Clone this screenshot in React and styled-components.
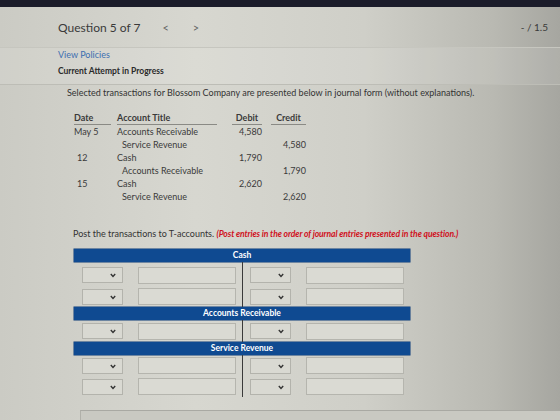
import React from 'react';
import styled, { createGlobalStyle } from 'styled-components';

const GlobalStyle = createGlobalStyle`
  html, body { margin: 0; padding: 0; }
  body {
    width: 560px; height: 420px; overflow: hidden;
    font-family: Lato, "Open Sans", sans-serif;
    color: #2f2f2f;
    background: linear-gradient(90deg, #cbcbc4 0%, #d7d7d0 35%, #cfcfc8 65%, #b9b9b2 88%, #a6a6a0 100%);
  }
`;

const TopBar = styled.div`height: 7px; background: #1b1c2a;`;

const Header = styled.div`
  display: flex; align-items: center; justify-content: space-between;
  height: 40px; padding: 0 12px 0 58px;
`;

const Title = styled.div`display: flex; align-items: center; font-size: 12px; color: #3a3a3a;`;
const Nav = styled.span`
  margin-left: ${({ $gap }) => $gap}px;
  font-size: 11px; color: #666;
`;
const Score = styled.span`font-size: 10px; color: #3a3a3a;`;

const Policies = styled.div`
  border-top: 1px solid #c6c6bf;
  border-bottom: 1px solid #bdbdb6;
  background: rgba(255, 255, 255, 0.1);
  padding: 0 0 4px 58px;
`;
const Link = styled.div`font-size: 9px; color: #3d6fb0; line-height: 14px;`;
const Status = styled.div`font-size: 8.5px; font-weight: 700; color: #2a2a2a; line-height: 18px;`;

const Body = styled.div`padding: 2px 0 0 67px;`;
const Intro = styled.p`margin: 0; font-size: 9px; color: #333; line-height: 12px;`;

const Journal = styled.table`
  margin: 12px 0 0 7px;
  width: 232px;
  border-collapse: collapse;
  table-layout: fixed;
  font-size: 9px; color: #3a3a3a;
  td, th { padding: 0; height: 13px; line-height: 13px; white-space: nowrap; }
  th { font-weight: 700; text-align: left; }
`;
const Col = styled.col`width: ${({ $w }) => $w}px;`;
const HeadLabel = styled.span`
  display: inline-block; box-sizing: border-box;
  width: ${({ $w }) => $w}px;
  text-align: ${({ $align }) => $align || 'left'};
  border-bottom: 1.5px solid #8a8a85; line-height: 12px;
`;
const DateCell = styled.td`padding-left: ${({ $pad }) => $pad || 0}px !important;`;
const AcctCell = styled.td`padding-left: ${({ $indent }) => ($indent ? 5 : 0)}px !important;`;
const NumCell = styled.td`text-align: right;`;
const HeadNum = styled.th`text-align: right !important;`;

const Instruction = styled.p`
  margin: 25px 0 0 6px; font-size: 9px; line-height: 12px; color: #333;
  em { color: #d0101c; font-weight: 700; font-size: 8.6px; letter-spacing: -0.1px; }
`;

const TAccounts = styled.div`margin: 9px 0 0 7px; width: 336px;`;

const Bar = styled.div`
  height: 13px; line-height: 13px;
  background: #0f4a91;
  color: #fff; font-size: 8.5px; font-weight: 700; text-align: center;
  box-shadow: 0 0 0 0.5px #0a3a78;
`;

const Row = styled.div`
  display: grid; grid-template-columns: 169px 1fr;
  height: ${({ $h }) => $h}px;
`;
const Side = styled.div`
  display: flex; align-items: center;
  padding-left: ${({ $pad }) => $pad}px;
  border-right: ${({ $split }) => ($split ? '1px solid #3a3a3a' : 'none')};
`;
const Select = styled.div`
  position: relative;
  width: 41px; height: 16px; box-sizing: border-box;
  border: 1px solid #b3b3ac; background: #d9d9d2;
  margin-right: 15px;
  svg { position: absolute; right: 6px; top: 5px; }
`;
const Field = styled.div`
  width: 98px; height: 17px; box-sizing: border-box;
  border: 1px solid #b5b5ae; background: #dadad3;
`;

const Next = styled.div`
  margin: 13px 0 0 13px; height: 20px;
  border-top: 1px solid #a9a9a3; border-left: 1px solid #b0b0a9;
  background: #c9c9c2;
`;

const Chevron = () => (
  <svg width="6" height="5" viewBox="0 0 6 5">
    <path d="M0.8 1 L3 3.4 L5.2 1" fill="none" stroke="#333" strokeWidth="1.4" />
  </svg>
);

const Entry = ({ h = 22 }) => (
  <Row $h={h}>
    <Side $pad={8} $split>
      <Select><Chevron /></Select>
      <Field />
    </Side>
    <Side $pad={7}>
      <Select><Chevron /></Select>
      <Field />
    </Side>
  </Row>
);

const journal = [
  { date: 'May 5', acct: 'Accounts Receivable', debit: '4,580' },
  { acct: 'Service Revenue', credit: '4,580', indent: true },
  { date: '12', acct: 'Cash', debit: '1,790', pad: 3 },
  { acct: 'Accounts Receivable', credit: '1,790', indent: true },
  { date: '15', acct: 'Cash', debit: '2,620', pad: 3 },
  { acct: 'Service Revenue', credit: '2,620', indent: true },
];

export default function App() {
  return (
    <>
      <GlobalStyle />
      <TopBar />
      <Header>
        <Title>
          Question 5 of 7
          <Nav $gap={22}>&lt;</Nav>
          <Nav $gap={24}>&gt;</Nav>
        </Title>
        <Score>- / 1.5</Score>
      </Header>
      <Policies>
        <Link>View Policies</Link>
        <Status>Current Attempt in Progress</Status>
      </Policies>
      <Body>
        <Intro>Selected transactions for Blossom Company are presented below in journal form (without explanations).</Intro>
        <Journal>
          <colgroup>
            <Col $w={43} />
            <Col $w={104} />
            <Col $w={41} />
            <Col $w={44} />
          </colgroup>
          <thead>
            <tr>
              <th><HeadLabel $w={37}>Date</HeadLabel></th>
              <th><HeadLabel $w={100}>Account Title</HeadLabel></th>
              <HeadNum><HeadLabel $w={30} $align="center">Debit</HeadLabel></HeadNum>
              <HeadNum><HeadLabel $w={35} $align="center">Credit</HeadLabel></HeadNum>
            </tr>
          </thead>
          <tbody>
            {journal.map((r, i) => (
              <tr key={i}>
                <DateCell $pad={r.pad}>{r.date}</DateCell>
                <AcctCell $indent={r.indent}>{r.acct}</AcctCell>
                <NumCell>{r.debit}</NumCell>
                <NumCell>{r.credit}</NumCell>
              </tr>
            ))}
          </tbody>
        </Journal>
        <Instruction>
          Post the transactions to T-accounts. <em>(Post entries in the order of journal entries presented in the question.)</em>
        </Instruction>
        <TAccounts>
          <Bar>Cash</Bar>
          <Row $h={2}><Side $split /><Side /></Row>
          <Entry />
          <Entry h={21} />
          <Bar>Accounts Receivable</Bar>
          <Entry h={22} />
          <Bar>Service Revenue</Bar>
          <Entry h={21} />
          <Entry h={21} />
        </TAccounts>
        <Next />
      </Body>
    </>
  );
}
